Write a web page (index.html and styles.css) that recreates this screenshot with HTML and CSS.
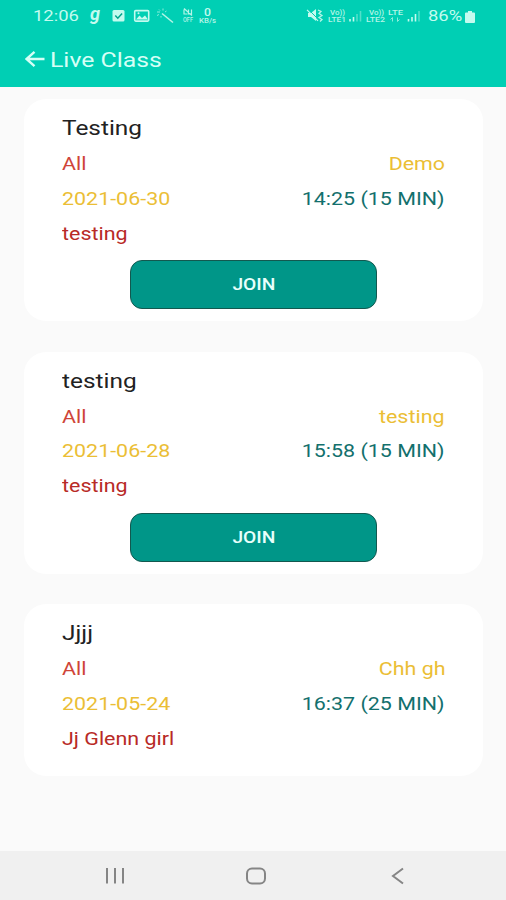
FILE: index.html
```html
<!DOCTYPE html>
<html lang="en">
<head>
    <meta charset="UTF-8">
    <meta name="viewport" content="width=device-width, initial-scale=1.0">
    <title>Live Class</title>
    <link rel="stylesheet" href="styles.css">
</head>
<body>
    <header>
        <div class="status">
            <span class="wide clock">12:06</span>
            <span class="glyph">g</span>
            <!-- notifications -->
            <svg class="notifs" width="111" height="20" viewBox="23 0 111 20">
                <rect x="23.500" y="3" width="12" height="11.500" rx="1.500" fill="#c4fbef"/>
                <path d="M26.300 8.500l2.500 2.700 4.300-4.800" fill="none" stroke="#00a58c" stroke-width="1.500"/>
                <rect x="45.700" y="3.600" width="14" height="10.500" rx="1" fill="none" stroke="#c4fbef" stroke-width="1.600"/>
                <path d="M47 12.500l3.500-4 2.500 2.500 3-2.500 3 4z" fill="#c4fbef"/>
                <circle cx="49.500" cy="6.300" r="1" fill="#c4fbef"/>
                <path d="M73 6.500l11 9" stroke="#b5f5e7" stroke-width="1.600"/>
                <path d="M68 5h3M70 2.500l1 1M74 1.500v2M68 8.500l2-1M76 5l1.500-1M72 9v1.500" stroke="#8aeedb" stroke-width="1"/>
                <path d="M95 2.500v4.500h3.500M99.500 2.500v4.500h3v-4.500M95 1.500l8 7" fill="none" stroke="#b5f5e7" stroke-width="1.200"/>
                <text class="tiny" x="94" y="15" textLength="10" lengthAdjust="spacingAndGlyphs">OFF</text>
                <text class="rate" x="118.500" y="9" text-anchor="middle" textLength="7" lengthAdjust="spacingAndGlyphs">0</text>
                <text class="tiny" x="110" y="16" textLength="17" lengthAdjust="spacingAndGlyphs">KB/s</text>
            </svg>
            <!-- sound and network -->
            <svg class="network" width="116" height="20" viewBox="0 0 116 20">
                <path d="M2 6h3l5-4v12l-5-4h-3z" fill="#c4fbef"/>
                <path d="M2 2l11 11" stroke="#00cfb4" stroke-width="1"/>
                <path d="M1 2.800l11 11" stroke="#c4fbef" stroke-width="1.200"/>
                <path d="M12 3l3 1.500-2 2 3 2-3 2 3 2-2 2" fill="none" stroke="#b5f5e7" stroke-width="1.300"/>
                <text class="tiny" x="24" y="8" textLength="15" lengthAdjust="spacingAndGlyphs">Vo))</text>
                <text class="tiny" x="22" y="14.500" textLength="18" lengthAdjust="spacingAndGlyphs">LTE1</text>
                <path d="M44 12v2.500M47.500 10v4.500" stroke="#c4fbef" stroke-width="1.600"/>
                <path d="M51 7v7.500M54.500 4v10.500" stroke="#52dfca" stroke-width="1.600"/>
                <text class="tiny" x="63" y="8" textLength="15" lengthAdjust="spacingAndGlyphs">Vo))</text>
                <text class="tiny" x="60" y="14.500" textLength="19" lengthAdjust="spacingAndGlyphs">LTE2</text>
                <text class="tiny lte" x="82" y="8" textLength="15" lengthAdjust="spacingAndGlyphs">LTE</text>
                <path d="M86.500 14.500v-4m-2 2l2-2M91.500 10.500v4m2-2l-2 2" fill="none" stroke="#8aeedb" stroke-width="1"/>
                <path d="M102.500 12v2.500M106 10v4.500M109.500 7v7.500" stroke="#c4fbef" stroke-width="1.600"/>
                <path d="M113 4v10.500" stroke="#52dfca" stroke-width="1.600"/>
            </svg>
            <span class="wide percent">86%</span>
            <svg class="battery" width="10" height="12" viewBox="0 0 10 12">
                <path d="M3 0h4v1.500h2q1 0 1 1v8.500q0 1-1 1h-8q-1 0-1-1v-8.500q0-1 1-1h2z" fill="#c4fbef"/>
            </svg>
        </div>
        <div class="bar">
            <svg width="20" height="18" viewBox="0 0 20 18">
                <path d="M19.500 9h-17.500M9.500 1.800l-8 7.200 8 7.200" fill="none" stroke="#d5fff6" stroke-width="2.400"/>
            </svg>
            <h1 class="wide">Live Class</h1>
        </div>
    </header>

    <main>
        <section class="card">
            <h2 class="wide">Testing</h2>
            <div class="row"><span class="wide red">All</span><span class="wide end yellow">Demo</span></div>
            <div class="row"><span class="wide yellow">2021-06-30</span><span class="wide end teal">14:25 (15 MIN)</span></div>
            <div class="row"><span class="wide dark-red">testing</span></div>
            <button class="join"><span>JOIN</span></button>
        </section>
        <section class="card">
            <h2 class="wide">testing</h2>
            <div class="row"><span class="wide red">All</span><span class="wide end yellow">testing</span></div>
            <div class="row"><span class="wide yellow">2021-06-28</span><span class="wide end teal">15:58 (15 MIN)</span></div>
            <div class="row"><span class="wide dark-red">testing</span></div>
            <button class="join"><span>JOIN</span></button>
        </section>
        <section class="card">
            <h2 class="wide">Jjjj</h2>
            <div class="row"><span class="wide red">All</span><span class="wide end yellow">Chh gh</span></div>
            <div class="row"><span class="wide yellow">2021-05-24</span><span class="wide end teal">16:37 (25 MIN)</span></div>
            <div class="row"><span class="wide dark-red">Jj Glenn girl</span></div>
        </section>
    </main>

    <footer>
        <svg width="20" height="18" viewBox="0 0 20 18">
            <path d="M2 1v15.500M10 1v15.500M18 1v15.500" stroke="#858585" stroke-width="2"/>
        </svg>
        <svg class="home" width="22" height="18" viewBox="0 0 22 18">
            <rect x="2" y="1.500" width="18" height="15" rx="5" fill="none" stroke="#858585" stroke-width="2"/>
        </svg>
        <svg width="14" height="18" viewBox="0 0 14 18">
            <path d="M12 1.500l-10 7.500 10 7.500" fill="none" stroke="#858585" stroke-width="2"/>
        </svg>
    </footer>
</body>
</html>
```
FILE: styles.css
```css
body{
    margin: 0;
    height: 900px;
    display: flex;
    flex-direction: column;
    background: #fafafa;
    font-family: Roboto, sans-serif;
    overflow: hidden;
}
header{
    height: 87px;
    background: #00cfb4;
    color: #d5fff6;
}
h1, h2{
    margin: 0;
    font-weight: 400;
}

/* wide lettering */
.wide{
    display: inline-block;
    white-space: nowrap;
    transform: scaleX(1.225);
    transform-origin: left;
}
.end{
    transform-origin: right;
}

.status{
    height: 32px;
    padding-left: 33px;
    display: flex;
    align-items: center;
    color: #c4fbef;
    font-size: 15.5px;
}
.status .wide{
    transform: scaleX(1.19);
}
.clock{
    width: 57px;
}
.glyph{
    width: 22px;
    height: 24px;
    font: italic 700 18px/20px Roboto, sans-serif;
}
.notifs{
    margin-top: 2px;
    overflow: visible;
}
.network{
    margin-left: 83px;
    margin-top: 2px;
    overflow: visible;
}
.percent{
    margin-left: 6px;
    width: 37px;
}
.battery{
    margin-top: 1px;
}
.tiny{
    font: 500 7px Roboto, sans-serif;
    fill: #b5f5e7;
}
.lte{
    font-size: 8px;
}
.rate{
    font: 500 10px Roboto, sans-serif;
    fill: #c4fbef;
}
.bar{
    height: 55px;
    padding-left: 25px;
    display: flex;
    align-items: center;
    gap: 5px;
}
.bar svg{
    margin-top: -1px;
}
h1{
    font-size: 20.5px;
}
h1.wide{
    transform: scaleX(1.21);
}

main{
    flex: 1;
    padding: 12px 23px 0 24px;
    display: flex;
    flex-direction: column;
    gap: 30.4px;
}
.card{
    box-sizing: border-box;
    height: 222.3px;
    padding: 12px 38px 0;
    background: #fff;
    border-radius: 22px;
    display: flex;
    flex-direction: column;
}
.card:last-child{
    height: 172px;
}
h2{
    height: 36px;
    line-height: 34px;
    font-size: 20.5px;
    color: #222;
}
.card .row{
    height: 34.8px;
    line-height: 35px;
    display: flex;
    justify-content: space-between;
    font-size: 17.5px;
}
h2.wide{
    transform: scaleX(1.19);
}
.red{
    color: #cf4438;
}
.dark-red{
    color: #b82a26;
}
.yellow{
    color: #ebbe35;
}
.teal{
    color: #13706d;
}
.join{
    width: 247px;
    height: 49px;
    margin: 9px auto 0;
    padding: 0;
    background: #009688;
    border: 1px solid #13584f;
    border-radius: 12px;
    color: #e8fffb;
    font: 500 16px Roboto, sans-serif;
}
.join span{
    display: inline-block;
    transform: scaleX(1.2);
}

footer{
    height: 49px;
    background: #f0f0f0;
    display: flex;
    align-items: center;
    justify-content: space-between;
    padding: 0 101px 0 105px;
}
.home{
    margin-right: 4px;
}
```
